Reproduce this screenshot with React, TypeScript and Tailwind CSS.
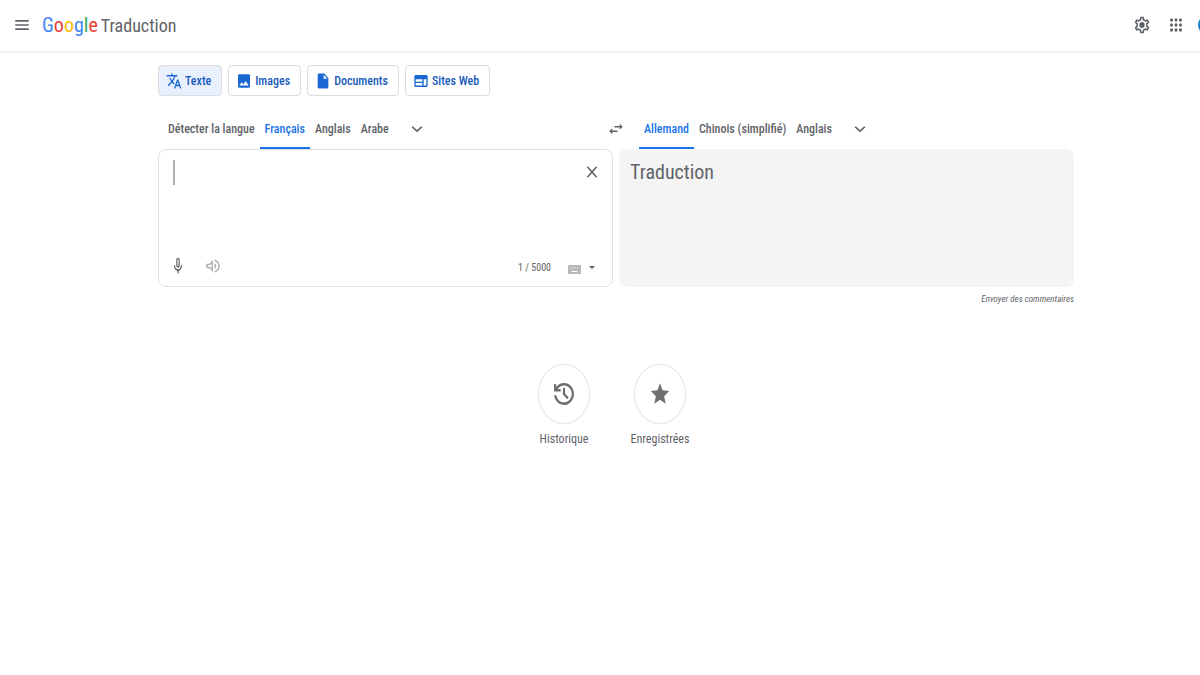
import { useState } from "react";
import type { ReactNode } from "react";
import { clsx } from "clsx";

type IconProps = { d: string; className: string; box?: string };

// Icons fill their box in both directions, so their proportions follow the class.
function Icon({ d, className, box = "0 0 24 24" }: IconProps) {
  return (
    <svg viewBox={box} preserveAspectRatio="none" fill="currentColor" aria-hidden="true" className={clsx("shrink-0", className)}>
      <path d={d} />
    </svg>
  );
}

const paths = {
  menu: "M3 18h18v-2H3v2zm0-5h18v-2H3v2zm0-7v2h18V6H3z",
  translate:
    "M12.87 15.07l-2.54-2.51.03-.03A17.52 17.52 0 0 0 14.07 6H17V4h-7V2H8v2H1v1.99h11.17C11.5 7.92 10.44 9.75 9 11.35 8.07 10.32 7.3 9.19 6.69 8h-2c.73 1.63 1.73 3.17 2.98 4.56l-5.09 5.02L4 19l5-5 3.11 3.11.76-2.04zM18.5 10h-2L12 22h2l1.12-3h4.75L21 22h2l-4.5-12zm-2.62 7l1.62-4.33L19.12 17h-3.24z",
  image:
    "M21 19V5c0-1.1-.9-2-2-2H5c-1.1 0-2 .9-2 2v14c0 1.1.9 2 2 2h14c1.1 0 2-.9 2-2zM8.5 13.500l2.5 3.01L14.5 12l4.5 6H5l3.500-4.500z",
  file: "M6 2c-1.1 0-1.990.9-1.990 2L4 20c0 1.100.890 2 1.990 2H18c1.100 0 2-.9 2-2V8l-6-6H6zm7 7V3.500L18.500 9H13z",
  web: "M20 4H4c-1.100 0-2 .9-2 2v12c0 1.100.9 2 2 2h16c1.100 0 2-.9 2-2V6c0-1.100-.9-2-2-2zm-6 14H4v-3.500h10V18zm0-5H4V9.500h10V13zm6 5h-4V9.500h4V18z",
  chevron: "M7.410 8.590L12 13.170l4.590-4.580L18 10l-6 6-6-6 1.410-1.410z",
  swap: "M6.990 11L3 15l3.990 4v-3H14v-2H6.990v-3zM21 9l-3.990-4v3H10v2h7.010v3L21 9z",
  close: "M19 6.410L17.590 5 12 10.590 6.410 5 5 6.410 10.590 12 5 17.590 6.410 19 12 13.410 17.590 19 19 17.590 13.410 12z",
  mic: "M12 14c1.660 0 3-1.340 3-3V5c0-1.660-1.340-3-3-3S9 3.340 9 5v6c0 1.660 1.340 3 3 3zm-1-9c0-.55.45-1 1-1s1 .45 1 1v6c0 .55-.45 1-1 1s-1-.45-1-1V5zm6 6c0 2.760-2.240 5-5 5s-5-2.240-5-5H5c0 3.530 2.610 6.430 6 6.920V21h2v-3.080c3.390-.49 6-3.390 6-6.920h-2z",
  volume:
    "M3 9v6h4l5 5V4L7 9H3zm7-.17v6.340L7.830 13H5v-2h2.830L10 8.830zM16.500 12A4.500 4.500 0 0 0 14 7.970v8.050A4.470 4.470 0 0 0 16.500 12zM14 3.230v2.060c2.890.86 5 3.540 5 6.710s-2.110 5.850-5 6.710v2.060c4.010-.91 7-4.490 7-8.770s-2.990-7.860-7-8.770z",
  keyboard:
    "M20 5H4c-1.100 0-2 .9-2 2v10c0 1.100.9 2 2 2h16c1.100 0 2-.9 2-2V7c0-1.100-.9-2-2-2zM7 8.500h1.500V10H7V8.500zm4.200 0h1.500V10h-1.500V8.500zm4.300 0H17V10h-1.500V8.500zM7.500 14.500h9V16h-9v-1.500z",
  history:
    "M480-120q-138 0-240.500-91.500T122-440h82q14 104 92.500 172T480-200q117 0 198.500-81.500T760-480q0-117-81.500-198.500T480-760q-69 0-129 32t-101 88h110v80H120v-240h80v94q51-64 124.500-99T480-840q75 0 140.500 28.500t114 77q48.500 48.500 77 114T840-480q0 75-28.500 140.500t-77 114q-48.500 48.500-114 77T480-120Zm112-192L440-464v-216h80v184l128 128-56 56Z",
  star: "M12 17.270L18.180 21l-1.640-7.030L22 9.240l-7.190-.61L12 2 9.190 8.630 2 9.240l5.460 4.730L5.820 21z",
  settings:
    "M19.430 12.980c.04-.32.07-.64.07-.98s-.03-.66-.07-.98l2.110-1.650c.19-.15.24-.42.12-.64l-2-3.460a.5.500 0 0 0-.61-.22l-2.490 1c-.52-.4-1.080-.73-1.690-.98l-.38-2.650A.49.490 0 0 0 14 2h-4c-.25 0-.46.18-.49.42l-.38 2.650c-.61.25-1.170.59-1.690.98l-2.490-1a.5.500 0 0 0-.61.22l-2 3.460c-.13.22-.07.49.12.64l2.110 1.650c-.04.32-.07.65-.07.98s.03.66.07.98l-2.110 1.650c-.19.15-.24.42-.12.64l2 3.460c.12.22.39.3.61.22l2.490-1c.52.4 1.080.73 1.690.98l.38 2.650c.03.24.24.42.49.42h4c.25 0 .46-.18.49-.42l.38-2.650c.61-.25 1.170-.59 1.690-.98l2.490 1c.23.09.49 0 .61-.22l2-3.460c.12-.22.07-.49-.12-.64l-2.110-1.650zm-1.980-1.710c.04.31.05.52.05.73s-.02.43-.05.73l-.14 1.130.89.7 1.080.84-.7 1.210-1.270-.51-1.040-.42-.9.680c-.43.32-.84.56-1.250.73l-1.060.43-.16 1.130-.2 1.350h-1.400l-.19-1.350-.16-1.130-1.060-.43a5.700 5.700 0 0 1-1.230-.71l-.91-.7-1.060.43-1.270.51-.7-1.210 1.080-.84.89-.7-.14-1.130c-.03-.31-.05-.54-.05-.74s.02-.43.05-.73l.14-1.130-.89-.7-1.080-.84.7-1.210 1.270.51 1.040.42.9-.68c.43-.32.84-.56 1.250-.73l1.060-.43.16-1.130.2-1.350h1.390l.19 1.350.16 1.130 1.060.43c.43.18.83.41 1.230.71l.91.7 1.060-.43 1.270-.51.7 1.210-1.070.85-.89.7.14 1.130zM12 8.500a3.500 3.500 0 1 0 0 7 3.500 3.500 0 0 0 0-7z",
  apps: "M6 8a2 2 0 1 0 0-4 2 2 0 0 0 0 4zm6 0a2 2 0 1 0 0-4 2 2 0 0 0 0 4zm6 0a2 2 0 1 0 0-4 2 2 0 0 0 0 4zM6 14a2 2 0 1 0 0-4 2 2 0 0 0 0 4zm6 0a2 2 0 1 0 0-4 2 2 0 0 0 0 4zm6 0a2 2 0 1 0 0-4 2 2 0 0 0 0 4zM6 20a2 2 0 1 0 0-4 2 2 0 0 0 0 4zm6 0a2 2 0 1 0 0-4 2 2 0 0 0 0 4zm6 0a2 2 0 1 0 0-4 2 2 0 0 0 0 4z",
};

const modes = [
  { label: "Texte", icon: paths.translate },
  { label: "Images", icon: paths.image },
  { label: "Documents", icon: paths.file },
  { label: "Sites Web", icon: paths.web },
];

function Tab({ active, onClick, children }: { active: boolean; onClick: () => void; children: ReactNode }) {
  return (
    <button
      type="button"
      onClick={onClick}
      className={clsx(
        "h-10 border-b-2 px-[5px] pt-0.5 text-[12px] font-medium whitespace-nowrap",
        active ? "border-[#1a73e8] text-[#1a73e8]" : "border-transparent text-[#5f6368]",
      )}
    >
      {children}
    </button>
  );
}

function Shortcut({ icon, label, box, size }: { icon: string; label: string; box?: string; size: string }) {
  return (
    <a href="#" className="flex w-24 flex-col items-center gap-[7px] text-[12px] leading-4 text-[#5f6368]">
      <span className="flex h-[60px] w-[52px] items-center justify-center rounded-[50%] border border-[#e4e4e4] text-[#6f6f6f]">
        <Icon d={icon} box={box} className={size} />
      </span>
      {label}
    </a>
  );
}

export default function App() {
  const [mode, setMode] = useState("Texte");
  const [source, setSource] = useState("Français");
  const [target, setTarget] = useState("Allemand");
  const [text, setText] = useState("");

  return (
    <div className="min-h-screen overflow-x-hidden bg-white font-['Roboto_Condensed','Roboto',sans-serif] text-[#5f6368]">
      <header className="flex h-[53px] items-center justify-between border-b-2 border-[#efefef] pb-0.5 pl-[13px]">
        <div className="flex items-center gap-[11px]">
          <button type="button" aria-label="Menu principal">
            <Icon d={paths.menu} className="h-5 w-[18px]" />
          </button>
          <a href="#" className="flex items-baseline gap-[3px] pt-0.5 text-[18px] leading-6">
            <span className="text-[20px]">
              <span className="text-[#4285f4]">G</span>
              <span className="text-[#ea4335]">o</span>
              <span className="text-[#fbbc05]">o</span>
              <span className="text-[#4285f4]">g</span>
              <span className="text-[#34a853]">l</span>
              <span className="text-[#ea4335]">e</span>
            </span>
            <span>Traduction</span>
          </a>
        </div>
        <div className="flex items-center">
          <button type="button" aria-label="Paramètres" className="grid h-[34px] w-[34px] place-items-center">
            <Icon d={paths.settings} className="h-5 w-[18px]" />
          </button>
          <button type="button" aria-label="Applications Google" className="grid h-[34px] w-[34px] place-items-center">
            <Icon d={paths.apps} className="h-5 w-[18px]" />
          </button>
          <span className="ml-[5px] w-0.5 overflow-hidden">
            <span className="block h-5 w-5 rounded-full bg-[#1a7fc1]" />
          </span>
        </div>
      </header>

      <main className="pt-3 pr-[126px] pl-[158px]">
        <nav className="flex gap-[6px]" aria-label="Type de traduction">
          {modes.map((m) => (
            <button
              key={m.label}
              type="button"
              onClick={() => setMode(m.label)}
              className={clsx(
                "flex h-[31px] items-center gap-[3px] rounded border border-[#dadce0] pr-[10px] pl-[7px] text-[12px] font-medium whitespace-nowrap text-[#185abc]",
                mode === m.label && "bg-[#e8f0fe]",
              )}
            >
              <Icon d={m.icon} className="h-[18px] w-4 text-[#1967d2]" />
              {m.label}
            </button>
          ))}
        </nav>

        <div className="mt-[13px] grid grid-cols-2 gap-x-[6px]">
          <div className="flex items-center justify-between">
            <div className="flex items-center pl-[5px]">
              {["Détecter la langue", "Français", "Anglais", "Arabe"].map((l) => (
                <Tab key={l} active={source === l} onClick={() => setSource(l)}>
                  {l}
                </Tab>
              ))}
              <button type="button" aria-label="Plus de langues sources" className="ml-3">
                <Icon d={paths.chevron} className="h-5 w-[22px]" />
              </button>
            </div>
            <button type="button" aria-label="Inverser les langues" className="-mr-3">
              <Icon d={paths.swap} className="h-[18px] w-[18px]" />
            </button>
          </div>
          <div className="flex items-center pl-5">
            {["Allemand", "Chinois (simplifié)", "Anglais"].map((l) => (
              <Tab key={l} active={target === l} onClick={() => setTarget(l)}>
                {l}
              </Tab>
            ))}
            <button type="button" aria-label="Plus de langues cibles" className="ml-3">
              <Icon d={paths.chevron} className="h-5 w-[22px]" />
            </button>
          </div>

          <section className="flex min-h-[138px] flex-col justify-between rounded-lg border border-[#e0e0e0] py-[10px] pr-[11px] pl-3">
            <div className="flex items-start gap-2 pl-[2px]">
              <span className="h-[25px] w-0.5 bg-[#b0b0b0]" />
              <textarea
                aria-label="Texte source"
                value={text}
                onChange={(e) => setText(e.target.value)}
                className="h-16 flex-1 resize-none text-[20px] leading-6 outline-none"
              />
              <button type="button" aria-label="Effacer le texte source" onClick={() => setText("")} className="pt-[2px]">
                <Icon d={paths.close} className="h-5 w-[18px]" />
              </button>
            </div>
            <div className="flex items-center gap-[17px] text-[10px]">
              <button type="button" aria-label="Traduire à l'oral">
                <Icon d={paths.mic} className="h-5 w-[14px]" />
              </button>
              <button type="button" aria-label="Écouter" className="pl-0.5 text-[#b0b0b0]">
                <Icon d={paths.volume} className="h-[18px] w-[18px]" />
              </button>
              <span className="ml-auto pt-0.5">1 / 5000</span>
              <button type="button" aria-label="Outils de saisie" className="flex items-center gap-2 pt-[6px] pr-[6px]">
                <Icon d={paths.keyboard} box="2 5 20 14" className="h-[9px] w-[13px] text-[#b8b8b8]" />
                <Icon d="M0 0h10L5 5z" box="0 0 10 5" className="mb-[3px] h-[3px] w-[6px]" />
              </button>
            </div>
          </section>

          <section className="min-h-[138px] rounded-lg bg-[#f4f4f4] px-[11px] py-[11px] text-[20px] leading-6">Traduction</section>
        </div>

        <div className="flex justify-end pt-1">
          <a href="#" className="text-[9px] leading-4 italic">
            Envoyer des commentaires
          </a>
        </div>

        <div className="mt-[57px] mr-2 flex justify-center">
          <Shortcut icon={paths.history} box="120 -840 720 720" size="h-[22px] w-5" label="Historique" />
          <Shortcut icon={paths.star} size="h-[26px] w-[22px]" label="Enregistrées" />
        </div>
      </main>
    </div>
  );
}
